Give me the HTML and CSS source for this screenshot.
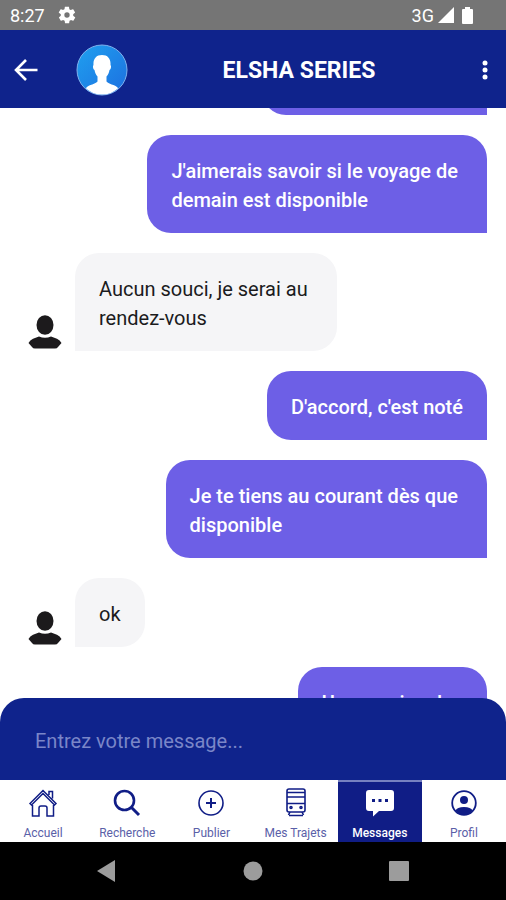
FILE: index.html
```html
<!DOCTYPE html>
<html lang="fr">
<head>
<meta charset="utf-8">
<meta name="viewport" content="width=device-width, initial-scale=1">
<title>Messages</title>
<link rel="stylesheet" href="styles.css">
</head>
<body>
<div class="status">
  <span>8:27</span>
  <svg class="status-gear" viewBox="0 0 24 24" width="20" height="20" fill="#fff"><path d="M19.4 13c0-.3.1-.7.1-1s0-.7-.1-1l2.1-1.600c.2-.2.2-.4.1-.6l-2-3.500c-.1-.2-.4-.3-.6-.2l-2.500 1c-.5-.4-1.100-.7-1.700-1l-.4-2.600c0-.3-.2-.5-.5-.5h-4c-.2 0-.5.2-.5.400l-.4 2.700c-.6.2-1.100.6-1.700 1l-2.500-1c-.2-.1-.5 0-.6.2l-2 3.500c-.1.2-.1.5.1.6L4.600 11c0 .3-.1.6-.1 1s0 .7.1 1l-2.100 1.600c-.2.2-.2.4-.1.600l2 3.500c.1.2.4.3.6.2l2.500-1c.5.4 1.100.7 1.700 1l.4 2.600c0 .3.3.5.5.5h4c.3 0 .5-.2.5-.5l.4-2.600c.6-.3 1.200-.6 1.700-1l2.500 1c.2.1.5 0 .6-.2l2-3.500c.1-.2.1-.5-.1-.6zM12 15.200a3.200 3.200 0 1 1 0-6.400 3.200 3.200 0 0 1 0 6.400z"/></svg>
  <span class="network">3G</span>
  <svg viewBox="0 0 16 16" width="16" height="16" fill="#fff"><path d="M16 0v16H0z"/></svg>
  <svg class="battery" viewBox="0 0 11 17" width="11" height="17" fill="#fff"><path d="M3 0h5v2h2q1 0 1 1v13q0 1-1 1H1q-1 0-1-1V3q0-1 1-1h2z"/></svg>
</div>

<header class="header">
  <button class="icon-button" type="button" aria-label="Retour">
    <svg viewBox="0 0 24 22" width="24" height="22" fill="none" stroke="#fff" stroke-width="2.600"><path d="M23.500 11H2M12 1 2 11l10 10"/></svg>
  </button>
  <svg class="contact" viewBox="0 0 52 52" width="52" height="52">
    <defs>
      <linearGradient id="sky" x1="0" y1="0" x2="1" y2="1"><stop offset="0" stop-color="#1fa0ef"/><stop offset="1" stop-color="#1d6fe0"/></linearGradient>
      <clipPath id="disc"><circle cx="26" cy="26" r="24.500"/></clipPath>
    </defs>
    <circle cx="26" cy="26" r="25" fill="url(#sky)" stroke="#7fb2ee" stroke-width="1"/>
    <path clip-path="url(#disc)" fill="#fff" d="M26 11c-6 0-9 4-8.500 10-1 1-.5 4 1 5 .5 3 1.500 5 3 6.500v5C20 40 13 40.500 10 44v8h32v-8c-3-3.500-10-4-11.500-6.500v-5c1.500-1.500 2.500-3.500 3-6.500 1.500-1 2-4 1-5C35 15 32 11 26 11z"/>
  </svg>
  <h1 class="title">ELSHA SERIES</h1>
  <button class="icon-button" type="button" aria-label="Options">
    <svg viewBox="0 0 6 20" width="6" height="20" fill="#fff"><circle cx="3" cy="3" r="2.500"/><circle cx="3" cy="10" r="2.500"/><circle cx="3" cy="17" r="2.500"/></svg>
  </button>
</header>

<main class="chat">
  <p class="bubble sent earlier"></p>
  <p class="bubble sent">J'aimerais savoir si le voyage de&nbsp;<br>demain est disponible</p>
  <div class="received-row">
    <svg class="person" viewBox="0 0 34 34" width="34" height="34" fill="#1c1a1c"><ellipse cx="17" cy="10" rx="8.500" ry="9.800"/><path d="M11 21.500q6 2.500 12 0l6 2.200q3 1.300 4.500 4.300l-3.500 4q-1 1.500-3 1.500H7q-2 0-3-1.500L.5 28q1.500-3 4.500-4.300z"/></svg>
    <p class="bubble received">Aucun souci, je serai au&nbsp;<br>rendez-vous</p>
  </div>
  <p class="bubble sent">D'accord, c'est noté</p>
  <p class="bubble sent">Je te tiens au courant dès que&nbsp;<br>disponible</p>
  <div class="received-row">
    <svg class="person" viewBox="0 0 34 34" width="34" height="34" fill="#1c1a1c"><ellipse cx="17" cy="10" rx="8.500" ry="9.800"/><path d="M11 21.500q6 2.500 12 0l6 2.200q3 1.300 4.500 4.300l-3.500 4q-1 1.500-3 1.500H7q-2 0-3-1.500L.5 28q1.500-3 4.500-4.300z"/></svg>
    <p class="bubble received">ok</p>
  </div>
  <p class="bubble sent">Un exercice des</p>
</main>

<form class="composer">
  <input class="message-input" type="text" aria-label="Message" placeholder="Entrez votre message...">
</form>

<nav class="tabs">
  <a class="tab" href="#accueil">
    <svg viewBox="0 0 30 30" width="30" height="30" fill="none" stroke="#101d86" stroke-width="1.500"><path d="M2 15.500 15 2.500l13 13-1.500 1.500L15 5.500 3.500 17zM21 7V3.500h3.500v7M4.500 17v11h6.500v-8q0-2 2-2h4q2 0 2 2v8h6.500V17"/></svg>
    <span>Accueil</span>
  </a>
  <a class="tab" href="#recherche">
    <svg viewBox="0 0 30 30" width="30" height="30" fill="none" stroke="#101d86" stroke-width="2.600"><circle cx="12.500" cy="12.500" r="9.500"/><path d="m19 19 8 8" stroke-width="3"/></svg>
    <span>Recherche</span>
  </a>
  <a class="tab" href="#publier">
    <svg viewBox="0 0 30 30" width="30" height="30" fill="none" stroke="#101d86" stroke-width="1.600"><circle cx="15" cy="15" r="12"/><path d="M15 10v10M10 15h10" stroke-width="2"/></svg>
    <span>Publier</span>
  </a>
  <a class="tab" href="#trajets">
    <svg viewBox="0 0 30 30" width="30" height="30" fill="none" stroke="#101d86" stroke-width="1.600"><rect x="6" y="1" width="18" height="23" rx="2"/><path d="M6 4.500h18M6 9h18M6 15.500h18M11.500 4.500h7M9 24l-1.500 3M21 24l1.500 3M8 27.500h14"/><circle cx="10" cy="19.500" r="1"/><circle cx="20" cy="19.500" r="1"/></svg>
    <span>Mes Trajets</span>
  </a>
  <a class="tab active" href="#messages" aria-current="page">
    <svg viewBox="0 0 30 30" width="30" height="30"><path fill="#fff" d="M4 2h22q3 0 3 3v15q0 3-3 3H14l-6 5.500V23H4q-3 0-3-3V5q0-3 3-3z"/><path fill="#101d86" d="M7 11h3v3H7zM13.500 11h3v3h-3zM20 11h3v3h-3z"/></svg>
    <span>Messages</span>
  </a>
  <a class="tab" href="#profil">
    <svg viewBox="0 0 30 30" width="30" height="30"><circle cx="15" cy="15" r="11.800" fill="none" stroke="#101d86" stroke-width="1.800"/><circle cx="15" cy="12" r="4" fill="#101d86"/><path fill="#101d86" d="M6.500 22.500q1.500-3.500 8.500-3.500t8.500 3.500Q20 27 15 27t-8.500-4.500z"/></svg>
    <span>Profil</span>
  </a>
</nav>

<div class="system-bar">
  <button class="icon-button" type="button" aria-label="Précédent"><svg viewBox="0 0 22 22" width="22" height="22" fill="#9c9c9c"><path d="M20 0v22L2 11z"/></svg></button>
  <button class="icon-button" type="button" aria-label="Écran d'accueil"><svg viewBox="0 0 22 22" width="22" height="22" fill="#9c9c9c"><circle cx="11" cy="11" r="9.500"/></svg></button>
  <button class="icon-button" type="button" aria-label="Applications récentes"><svg viewBox="0 0 22 22" width="22" height="22" fill="#9c9c9c"><rect x="1" y="1" width="20" height="20" rx="1"/></svg></button>
</div>
</body>
</html>
```
FILE: styles.css
```css
* {
  box-sizing: border-box;
}

body {
  margin: 0;
  height: 100vh;
  display: flex;
  flex-direction: column;
  background: #fff;
  font-family: Roboto, sans-serif;
}

svg {
  display: block;
  flex: none;
}

.icon-button {
  display: flex;
  padding: 0;
  border: 0;
  background: none;
}

.status {
  flex: none;
  display: flex;
  align-items: center;
  height: 30px;
  padding: 0 33px 0 10px;
  background: #757575;
  color: #fff;
  font-size: 18px;
}

.status-gear {
  margin-left: 12px;
}

.network {
  margin-left: auto;
  margin-right: 4px;
}

.battery {
  margin-left: 8px;
}

.header {
  flex: none;
  display: flex;
  align-items: center;
  height: 78px;
  padding: 2px 18px 0 14px;
  background: #0f238c;
}

.contact {
  margin-left: 38px;
}

.title {
  flex: 1;
  margin: 0;
  padding: 2px 48px 0 30px;
  color: #fff;
  font-size: 23px;
  font-weight: 700;
  line-height: 32px;
  text-align: center;
}

.title + .icon-button {
  margin-left: -6px;
}

.chat {
  flex: 1;
  min-height: 0;
  overflow: hidden;
  display: flex;
  flex-direction: column;
  justify-content: flex-end;
  gap: 20px;
  padding: 0 19px 44px 28px;
}

.bubble {
  flex: none;
  margin: 0;
  padding: 22px 24px 18px;
  border-radius: 24px;
  font-size: 20px;
  line-height: 29px;
}

.sent {
  align-self: flex-end;
  border-bottom-right-radius: 0;
  background: #6d5fe6;
  color: #fff;
  font-weight: 500;
}

.earlier {
  width: 49%;
  min-height: 69px;
}

.received {
  border-bottom-left-radius: 0;
  background: #f5f5f7;
  color: #1b1b1d;
}

.received-row {
  flex: none;
  display: flex;
  align-items: flex-end;
  gap: 13px;
}

.person {
  margin-bottom: 2px;
}

.composer {
  flex: none;
  position: relative;
  display: flex;
  height: 82px;
  margin-top: -82px;
  padding: 0 35px;
  border-radius: 24px 24px 0 0;
  background: #0f238c;
}

.message-input {
  flex: 1;
  min-width: 0;
  padding: 4px 0 0;
  border: 0;
  outline: 0;
  background: none;
  color: #fff;
  font: 400 20px Roboto, sans-serif;
}

.message-input::placeholder {
  color: #7a86c8;
  opacity: 1;
}

.tabs {
  flex: none;
  display: flex;
  height: 62px;
  padding-left: 1px;
}

.tab {
  flex: 1;
  display: flex;
  flex-direction: column;
  align-items: center;
  gap: 8px;
  padding-top: 6px;
  border-top: 2px solid #fff;
  color: #5a60a8;
  font-size: 12px;
  line-height: 14px;
  text-decoration: none;
  white-space: nowrap;
}

.active {
  border-top-color: #7680c0;
  background: #101d86;
  color: #fff;
  font-weight: 500;
}

.system-bar {
  flex: none;
  display: flex;
  align-items: center;
  justify-content: space-between;
  height: 58px;
  padding: 0 96px 0 95px;
  background: #000;
}
```
